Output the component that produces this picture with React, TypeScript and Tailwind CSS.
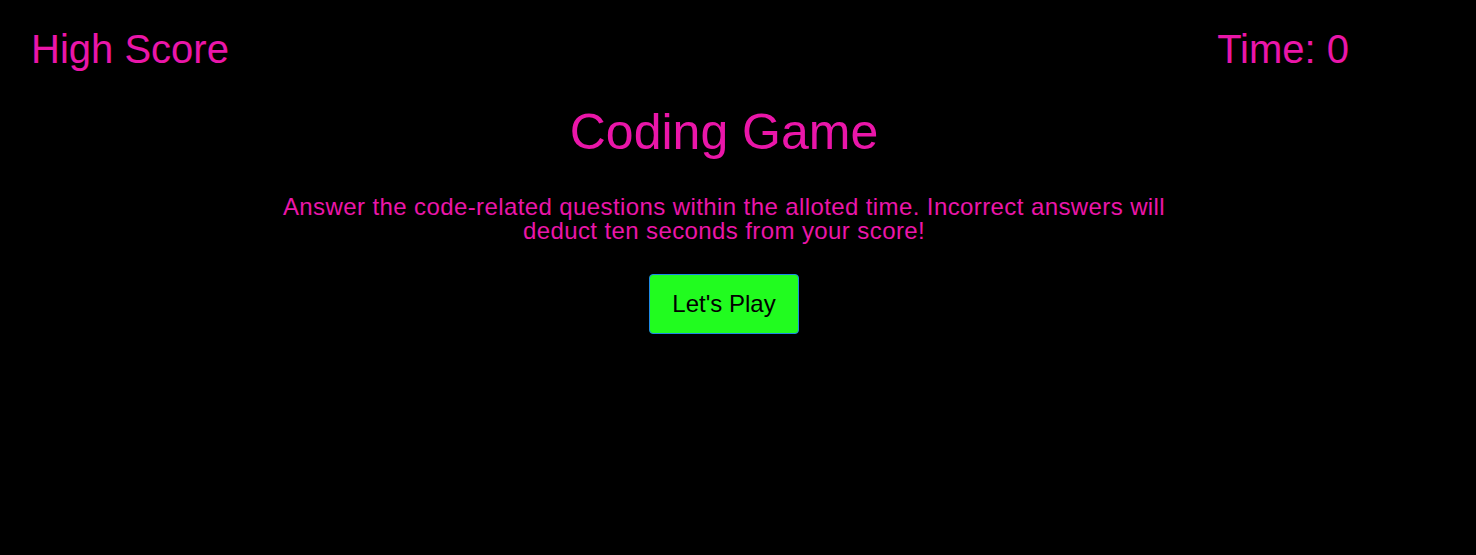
export default function App() {
  return (
    <div
      className="min-h-[555px] w-full bg-black text-[#ea16a9]"
      style={{ fontFamily: '"Liberation Sans", Arial, sans-serif' }}
    >
      <div className="w-[1448px]">
        {/* Header */}
        <header className="flex items-start justify-between pt-[26px] pl-[31px] pr-[99px]">
          <div className="text-[40px] leading-[46px]">High Score</div>
          <div className="text-[40px] leading-[46px]">Time: 0</div>
        </header>

        <main className="flex flex-col items-center">
          <h1 className="mt-[32px] text-[50px] leading-[57px]">Coding Game</h1>
          <p className="mt-[34px] w-[892px] text-center text-[24px] leading-[24px] tracking-[0.4px]">
            Answer the code-related questions within the alloted time. Incorrect answers will deduct ten seconds from your score!
          </p>
          <button className="mt-[31px] h-[60px] w-[150px] rounded-[4px] border border-[#1e88e5] bg-[#21fc1f] text-[24px] text-black">
            Let's Play
          </button>
        </main>
      </div>
    </div>
  );
}
